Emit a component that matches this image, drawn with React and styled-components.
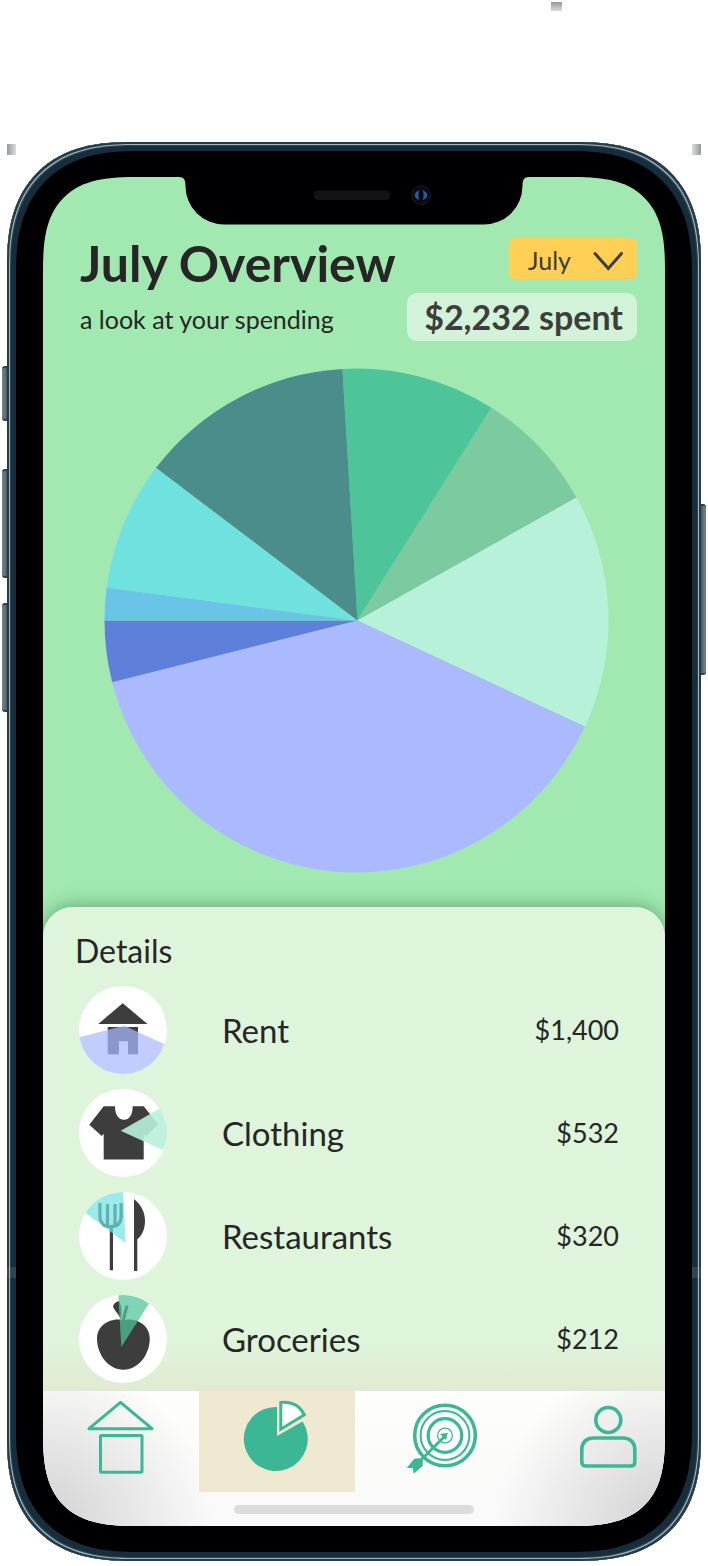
import React, { useState } from "react";
import styled, { createGlobalStyle } from "styled-components";

const GlobalStyle = createGlobalStyle`
  *, *::before, *::after { box-sizing: border-box; }
  body {
    margin: 0;
    background: #fff;
    color: #262626;
    font-family: Lato, "Liberation Sans", sans-serif;
  }
`;

const Page = styled.div`
  position: relative;
  max-width: 708px;
  margin: 0 auto;
  padding: 142px 7px 5px;
`;

const Phone = styled.div`
  position: relative;
  padding: 35px 36px;
  border-radius: 108px;
  background: #000003;
  box-shadow:
    inset 0 0 0 2px #263b45,
    inset 0 0 0 3px #9db5c0,
    inset 0 0 0 4px #2c4450,
    inset 0 0 0 9px #172d3b;

  @supports (corner-shape: superellipse(1.3)) {
    border-radius: 124px;
    corner-shape: superellipse(1.3);
  }
`;

const SideKey = styled.span`
  position: absolute;
  top: ${(p) => p.$top}px;
  ${(p) => p.$side}: -5px;
  width: 5px;
  height: ${(p) => p.$length}px;
  border: solid #2f4046;
  border-width: 2px 0;
  border-radius: ${(p) => (p.$side === "left" ? "3px 0 0 3px" : "0 3px 3px 0")};
  background: linear-gradient(
    to ${(p) => p.$side},
    #405561,
    #5d747e 40%,
    #6c8487
  );
`;

const AntennaBand = styled.span`
  position: absolute;
  top: ${(p) => p.$top}px;
  ${(p) => p.$side}: ${(p) => p.$inset}px;
  width: ${(p) => (p.$flat ? 11 : 9)}px;
  height: ${(p) => (p.$flat ? 9 : 11)}px;
  opacity: ${(p) => (p.$faint ? 0.15 : 1)};
  background: linear-gradient(
    to ${(p) => (p.$flat ? "bottom" : p.$side === "left" ? "right" : "left")},
    #949a9c,
    #b3b9ba 45%,
    #dadddd
  );
`;

const Screen = styled.div`
  position: relative;
  display: flex;
  flex-direction: column;
  overflow: hidden;
  border-radius: 76px;
  background: #a1e9b0;

  @supports (corner-shape: superellipse(1.5)) {
    border-radius: 95px;
    corner-shape: superellipse(1.5);
  }
`;

const Notch = styled.svg`
  position: absolute;
  top: 0;
  left: 50%;
  width: 350px;
  height: 48px;
  transform: translateX(-50%);
`;

const Header = styled.header`
  display: grid;
  grid-template-columns: 1fr auto;
  grid-template-rows: 41px 48px;
  row-gap: 14px;
  align-items: center;
  padding: 61px 28px 0 37px;
`;

const Title = styled.h1`
  margin: 0;
  padding-top: 8px;
  font-size: 50px;
  line-height: 48px;
  font-weight: 700;
  white-space: nowrap;
`;

const Subtitle = styled.p`
  margin: 0;
  padding-top: 4px;
  font-size: 25px;
  line-height: 32px;
  white-space: nowrap;
`;

const MonthPicker = styled.label`
  position: relative;
  display: block;
  width: 128px;
  height: 41px;
  justify-self: end;
`;

const MonthSelect = styled.select`
  appearance: none;
  width: 100%;
  height: 100%;
  padding: 2px 48px 0 19px;
  border: 0;
  border-radius: 6px;
  background: #ffcf56;
  color: #3d3d3d;
  font: 400 25px/32px Lato, "Liberation Sans", sans-serif;
`;

const Chevron = styled.svg`
  position: absolute;
  top: 12px;
  right: 13px;
  width: 32px;
  height: 22px;
  pointer-events: none;
`;

const Spent = styled.strong`
  display: flex;
  align-items: center;
  justify-content: flex-end;
  width: 230px;
  height: 48px;
  padding: 0 14px;
  border-radius: 10px;
  background: #d3f3d9;
  color: #3d3d3d;
  font-size: 34px;
  line-height: 40px;
  font-weight: 700;
  white-space: nowrap;
`;

const ChartArea = styled.figure`
  display: flex;
  justify-content: center;
  margin: 0;
  padding: 27px 56px 34px 61px;
`;

const PieSvg = styled.svg`
  display: block;
  width: 100%;
  max-width: 505px;
  height: auto;
`;

const Details = styled.section`
  padding: 24px 46px 8px 32px;
  border-radius: 30px 30px 0 0;
  background: linear-gradient(to top, #e0ead2, #def4db 48px);
  box-shadow: 0 -2px 18px rgba(40, 90, 60, 0.45);
`;

const DetailsTitle = styled.h2`
  margin: 0 0 15px;
  font-size: 32px;
  line-height: 40px;
  font-weight: 400;
`;

const Expenses = styled.ul`
  display: flex;
  flex-direction: column;
  gap: 15px;
  margin: 0;
  padding: 0;
  list-style: none;
`;

const Expense = styled.li`
  display: grid;
  grid-template-columns: 88px 1fr auto;
  column-gap: 55px;
  align-items: center;
  padding-left: 4px;
`;

const Badge = styled.svg`
  display: block;
  width: 88px;
  height: 88px;
  border-radius: 50%;
  background: #fff;
`;

const ExpenseName = styled.span`
  font-size: 33px;
  line-height: 40px;
`;

const Amount = styled.span`
  font-size: 27px;
  line-height: 36px;
`;

const BottomBar = styled.footer`
  position: relative;
  display: flex;
  flex-direction: column;
  align-items: center;
  gap: 13px;
  padding-bottom: 12px;
  background:
    radial-gradient(circle at 0 100%, #d0d0d0, #e0e0e0 60px, rgba(250, 250, 250, 0) 170px),
    radial-gradient(circle at 100% 100%, #d0d0d0, #e0e0e0 60px, rgba(250, 250, 250, 0) 170px),
    linear-gradient(#fefefd, #f9f9f9);
`;

const Tabs = styled.nav`
  display: grid;
  grid-template-columns: 156fr 156fr 172fr 138fr;
  width: 100%;
`;

const Tab = styled.a`
  display: flex;
  justify-content: center;
  height: 101px;
  padding-top: 9px;
  padding-left: ${(p) => (p.$last ? 24 : 0)}px;
  background: ${(p) => (p.$active ? "#eee9d0" : "transparent")};
  color: #3cb795;
`;

const TabIcon = styled.svg`
  display: block;
  flex: none;
  width: 72px;
  height: 76px;
`;

const HomeIndicator = styled.span`
  width: 240px;
  height: 9px;
  border-radius: 5px;
  background: #dcdcdc;
`;

const slices = [
  { name: "Groceries", from: -3.2, to: 32.4, color: "#4ec49a" },
  { name: "Transport", from: 32.4, to: 60.8, color: "#7ccba0" },
  { name: "Clothing", from: 60.8, to: 114.9, color: "#b8f1da" },
  { name: "Rent", from: 114.9, to: 255.8, color: "#abb9fe" },
  { name: "Utilities", from: 255.8, to: 270, color: "#5e80da" },
  { name: "Phone", from: 270, to: 277.5, color: "#6ac4e8" },
  { name: "Fun", from: 277.5, to: 307.3, color: "#6fe2df" },
  { name: "Restaurants", from: 307.3, to: 356.8, color: "#4a8d8a" },
];

const rim = (deg) => {
  const a = (deg * Math.PI) / 180;
  return `${252 + 251.5 * Math.sin(a)} ${252 - 251.5 * Math.cos(a)}`;
};

function SpendingPie() {
  return (
    <PieSvg viewBox="0 0 504 504" role="img" aria-label="Spending by category">
      {slices.map((s) => (
        <path
          key={s.name}
          fill={s.color}
          d={`M253 252L${rim(s.from)}A251.5 251.5 0 0 1 ${rim(s.to)}Z`}
        />
      ))}
    </PieSvg>
  );
}

const INK = "#3d3d3d";

const RentArt = () => (
  <>
    <path fill={INK} d="M43.7 17.3L68.5 38H19.2Z" />
    <path fill={INK} d="M28.7 41H59V68.3H49V55.3H40V68.3H28.7Z" />
    <path fill="#abb9fe" fillOpacity=".72" d="M45.3 39.7L85.5 58.3A44 44 0 0 1 0 51.3Z" />
  </>
);

const ClothingArt = () => (
  <>
    <path
      fill={INK}
      d="M24.7 17.3H36C36 25 39 30.7 45 30.7S53.7 25 53.7 17.3H64.7L79.3 35.5L67 47L64.7 44.7V70.5H24.7V44.7L22.7 47L10.3 35.7Z"
    />
    <path fill="#b8f1da" fillOpacity=".9" d="M41.7 41.7L81.7 19A44 44 0 0 1 84 61.3Z" />
  </>
);

const RestaurantArt = () => (
  <>
    <path
      fill="none"
      stroke={INK}
      strokeWidth="3.2"
      d="M20.9 11V24C20.9 31 25.5 34.7 32 34.7S42.1 31 42.1 24V11M28.5 12V33M36 12V33M32.4 34V78.3"
    />
    <path fill={INK} d="M55 7C62 12.5 66 20 66 29C66 37 63 43.5 58.3 47.3V79H55Z" />
    <path fill="#6fe2df" fillOpacity=".7" d="M46.7 51L6.3 20.7A44 44 0 0 1 44 0Z" />
  </>
);

const GroceryArt = () => (
  <>
    <path
      fill={INK}
      d="M44.5 25.5C37 22 18 27 18 43.5C18 59 29 74.7 44.4 74.7S70.8 59 70.8 43.5C70.8 27 52 22 44.5 25.5Z"
    />
    <path fill={INK} d="M42 24.5C40 19 34.5 15 34 11C35 8.5 37 6.5 40 6C43 11 43 18 42 24.5Z" />
    <path fill="none" stroke={INK} strokeWidth="3" d="M44 26L48 10.7" />
    <path fill="#4ec49a" fillOpacity=".73" d="M42.3 52L39.3 0A44 44 0 0 1 70 8.6Z" />
  </>
);

const expenses = [
  { name: "Rent", amount: "$1,400", Art: RentArt },
  { name: "Clothing", amount: "$532", Art: ClothingArt },
  { name: "Restaurants", amount: "$320", Art: RestaurantArt },
  { name: "Groceries", amount: "$212", Art: GroceryArt },
];

const HomeIcon = () => (
  <TabIcon viewBox="0 0 72 76" fill="none" stroke="currentColor" strokeWidth="3" strokeLinejoin="round" aria-hidden="true">
    <path d="M35.5 2.3L67 28.7H4Z" />
    <rect x="15.5" y="35.5" width="41.5" height="36.7" rx="1" />
  </TabIcon>
);

const PieIcon = () => (
  <TabIcon viewBox="0 0 72 76" aria-hidden="true">
    <path fill="currentColor" d="M36 36V7A32 32 0 1 0 61.6 21.5Z" />
    <path
      fill="#fff"
      stroke="currentColor"
      strokeWidth="3"
      d="M39.8 2.4V29.2L63.4 14.8C59 6 51 1.4 39.8 2.4Z"
    />
  </TabIcon>
);

const TargetIcon = () => (
  <TabIcon viewBox="0 0 72 76" fill="none" stroke="currentColor" aria-hidden="true">
    <circle cx="40" cy="35.5" r="30.3" strokeWidth="3.5" />
    <circle cx="40" cy="35.5" r="24.4" strokeWidth="2" />
    <circle cx="40" cy="35.5" r="16.8" strokeWidth="3.2" />
    <circle cx="40" cy="35.5" r="7.4" strokeWidth="1.2" />
    <path d="M17 59L39 37" strokeWidth="2.8" />
    <path
      fill="currentColor"
      stroke="none"
      d="M42.8 32.8L41 40L35 34ZM1.7 68L9.3 58.7L18 58L17.6 66L8.8 73.8L7.8 68Z"
    />
  </TabIcon>
);

const ProfileIcon = () => (
  <TabIcon viewBox="0 0 72 76" fill="none" stroke="currentColor" strokeWidth="3.6" aria-hidden="true">
    <circle cx="36.3" cy="20" r="12.5" />
    <path d="M9.8 49.5C9.8 42.5 14.5 38 21 38H51.5C58 38 62.8 42.5 62.8 49.5V62Q62.8 66 58.8 66H13.8Q9.8 66 9.8 62Z" />
  </TabIcon>
);

const tabs = [
  { label: "Home", Icon: HomeIcon },
  { label: "Overview", Icon: PieIcon, active: true },
  { label: "Goals", Icon: TargetIcon },
  { label: "Profile", Icon: ProfileIcon, last: true },
];

function NotchArt() {
  return (
    <Notch viewBox="0 0 350 48" aria-hidden="true">
      <path
        fill="#000003"
        d="M0 0C5 0 6.5 3 6.5 9A38.5 38.5 0 0 0 45 47.5H305A38.5 38.5 0 0 0 343.5 9C343.5 3 345 0 350 0Z"
      />
      <rect x="134.5" y="13.5" width="77" height="9.5" rx="4.7" fill="#131316" />
      <circle cx="242" cy="18.3" r="9.5" fill="#0a0a10" stroke="#191a20" />
      <ellipse cx="242" cy="18.3" rx="6.2" ry="5" fill="#1c5fa8" />
      <ellipse cx="242" cy="18.3" rx="2.6" ry="5.6" fill="#06080f" />
    </Notch>
  );
}

export default function App() {
  const [month, setMonth] = useState("July");
  return (
    <>
      <GlobalStyle />
      <Page>
        <AntennaBand $flat $side="right" $inset={146} $top={2} />
        <AntennaBand $side="left" $inset={7} $top={144} />
        <AntennaBand $side="right" $inset={7} $top={144} />
        <Phone>
          <AntennaBand $faint $side="left" $inset={0} $top={1125} />
          <AntennaBand $faint $side="right" $inset={0} $top={1125} />
          <SideKey $side="left" $top={224} $length={55} />
          <SideKey $side="left" $top={327} $length={109} />
          <SideKey $side="left" $top={461} $length={109} />
          <SideKey $side="right" $top={362} $length={171} />
          <Screen>
            <NotchArt />
            <Header>
              <Title>{month} Overview</Title>
              <MonthPicker>
                <MonthSelect
                  aria-label="Month"
                  value={month}
                  onChange={(e) => setMonth(e.target.value)}
                >
                  <option>June</option>
                  <option>July</option>
                  <option>August</option>
                </MonthSelect>
                <Chevron viewBox="0 0 32 22" aria-hidden="true">
                  <path
                    d="M3 3.5L16.3 18.5L29.5 3.5"
                    fill="none"
                    stroke={INK}
                    strokeWidth="3"
                    strokeLinecap="round"
                  />
                </Chevron>
              </MonthPicker>
              <Subtitle>a look at your spending</Subtitle>
              <Spent>$2,232 spent</Spent>
            </Header>
            <ChartArea>
              <SpendingPie />
            </ChartArea>
            <Details>
              <DetailsTitle>Details</DetailsTitle>
              <Expenses>
                {expenses.map(({ name, amount, Art }) => (
                  <Expense key={name}>
                    <Badge viewBox="0 0 88 88" aria-hidden="true">
                      <Art />
                    </Badge>
                    <ExpenseName>{name}</ExpenseName>
                    <Amount>{amount}</Amount>
                  </Expense>
                ))}
              </Expenses>
            </Details>
            <BottomBar>
              <Tabs>
                {tabs.map(({ label, Icon, active, last }) => (
                  <Tab key={label} href="#" aria-label={label} $active={active} $last={last}>
                    <Icon />
                  </Tab>
                ))}
              </Tabs>
              <HomeIndicator />
            </BottomBar>
          </Screen>
        </Phone>
      </Page>
    </>
  );
}
